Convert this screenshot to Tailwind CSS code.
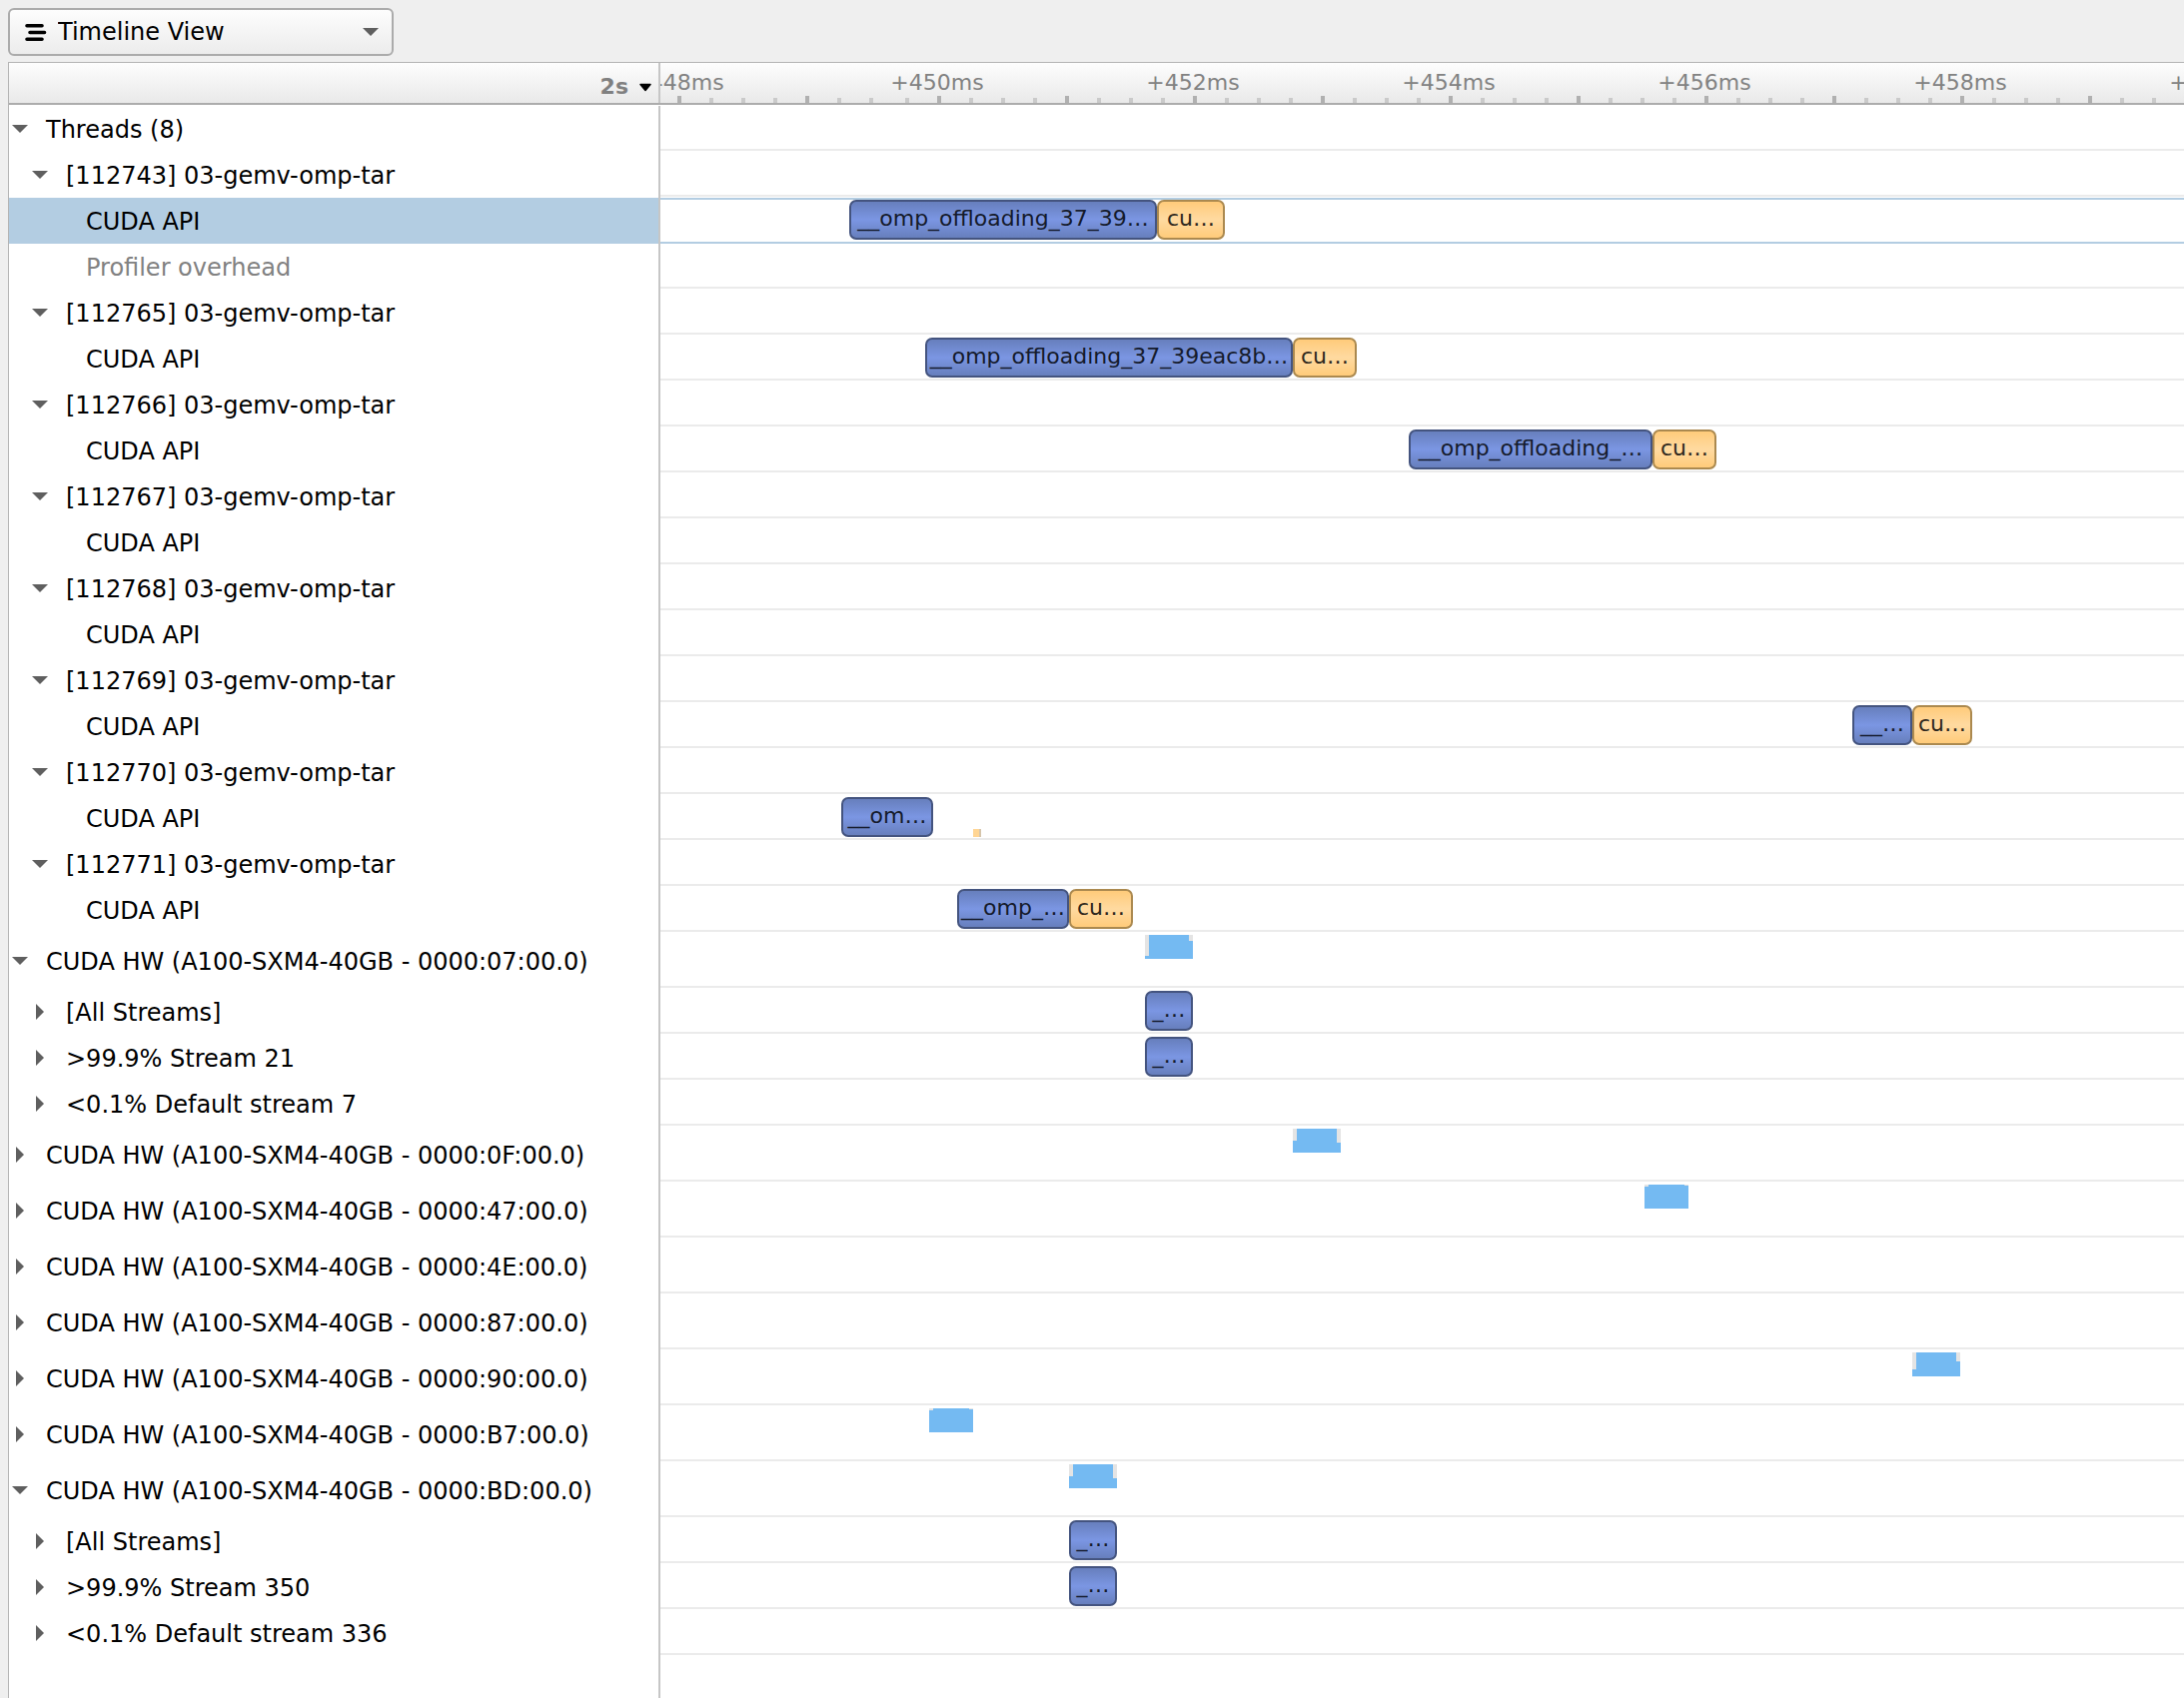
<!DOCTYPE html>
<html lang="en">
<head>
<meta charset="utf-8">
<title>Timeline View</title>
<script src="https://cdn.jsdelivr.net/npm/@tailwindcss/browser@4"></script>
</head>
<body class="flex h-screen flex-col overflow-hidden bg-[#efefef] pt-2 pl-2 font-['DejaVu_Sans',sans-serif] text-2xl text-black">
  <div class="relative mb-1.5 h-12 w-[386px] shrink-0">
    <select aria-label="View" class="h-12 w-full appearance-none rounded-md border-2 border-[#ababab] bg-linear-to-b from-[#fdfdfd] to-[#ececec] pl-12 text-2xl">
      <option>Timeline View</option>
    </select>
    <svg class="pointer-events-none absolute top-4 left-[17px]" width="22" height="18" viewBox="0 0 22 18" aria-hidden="true">
      <path d="M2 1.800H17M5 8.500H19.500M2 15.300H17" stroke="#000" stroke-width="3.600" stroke-linecap="round"/>
    </svg>
    <svg class="pointer-events-none absolute top-5 left-[355px]" width="16" height="8" viewBox="0 0 16 8" aria-hidden="true"><path d="M0 0H16L8 8Z" fill="#5f5f5f"/></svg>
  </div>

  <main class="flex min-h-0 flex-1 flex-col border-t border-l border-[#b4b4b4] bg-white">
    <header class="flex h-[42px] shrink-0 border-b-2 border-[#acacac] bg-linear-to-b from-[#fdfdfd] to-[#e9e9e9]">
      <div class="flex w-[652px] shrink-0 items-center justify-end border-r-2 border-[#c6c6c6] pt-2 pr-1.5">
        <button type="button" class="flex items-center gap-2.5 text-[22px] leading-7 font-bold text-[#808080]">2s
          <svg width="14" height="9" viewBox="0 0 14 9" aria-hidden="true"><path d="M2 1.500H12L7 7.500Z" fill="#000" stroke="#000" stroke-width="1.500" stroke-linejoin="round"/></svg>
        </button>
      </div>
      <div id="ruler" class="relative flex-1 overflow-hidden text-[22px] leading-7 text-[#828282]"></div>
    </header>
    <div id="rows" class="flex flex-1 flex-col pt-px"></div>
  </main>

<script>
  const kernel = (left, width, text) => ({ type: 'kernel', left, width, text });
  const call = (left, width, text = 'cu…') => ({ type: 'call', left, width, text });
  // lead and tail: height of the idle part in the first and last sample
  const load = (left, width, lead, tail) => ({ type: 'load', left, width, lead, tail });
  const thread = (id, ...bars) => [
    { level: 1, open: true, name: `[${id}] 03-gemv-omp-tar` },
    { level: 2, name: 'CUDA API', bars },
  ];
  const gpu = (bus, open, ...bars) => ({ level: 0, open, tall: true, name: `CUDA HW (A100-SXM4-40GB - 0000:${bus}:00.0)`, bars });
  const stream = (name, ...bars) => ({ level: 1, open: false, name, bars });

  const rows = [
    { level: 0, open: true, name: 'Threads (8)' },
    { level: 1, open: true, name: '[112743] 03-gemv-omp-tar' },
    { level: 2, name: 'CUDA API', selected: true, bars: [kernel(189, 308, '__omp_offloading_37_39…'), call(497, 68)] },
    { level: 2, name: 'Profiler overhead', muted: true },
    ...thread(112765, kernel(265, 368, '__omp_offloading_37_39eac8b…'), call(633, 64)),
    ...thread(112766, kernel(749, 244, '__omp_offloading_…'), call(993, 64)),
    ...thread(112767),
    ...thread(112768),
    ...thread(112769, kernel(1193, 60, '__…'), call(1253, 60)),
    ...thread(112770, kernel(181, 92, '__om…'), { type: 'dot', left: 313, width: 8 }),
    ...thread(112771, kernel(297, 112, '__omp_…'), call(409, 64)),
    gpu('07', true, load(485, 48, 21, 6)),
    stream('[All Streams]', kernel(485, 48, '_…')),
    stream('>99.9% Stream 21', kernel(485, 48, '_…')),
    stream('<0.1% Default stream 7'),
    gpu('0F', false, load(633, 48, 12, 14)),
    gpu('47', false, load(985, 44, 2, 1)),
    gpu('4E', false),
    gpu('87', false),
    gpu('90', false, load(1253, 48, 17, 9)),
    gpu('B7', false, load(269, 44, 2, 1)),
    gpu('BD', true, load(409, 48, 12, 14)),
    stream('[All Streams]', kernel(409, 48, '_…')),
    stream('>99.9% Stream 350', kernel(409, 48, '_…')),
    stream('<0.1% Default stream 336'),
  ];

  const esc = s => s.replace(/</g, '&lt;').replace(/>/g, '&gt;');
  const barClass = {
    kernel: 'top-0.5 flex h-10 items-center justify-center rounded-[7px] border-2 border-[#44547f] bg-linear-to-b from-[#677fbd] via-[#7b96e3] to-[#677fbd] pb-0.5 text-[#151b2c]',
    call: 'top-0.5 flex h-10 items-center justify-center rounded-[7px] border-2 border-[#ab894f] bg-linear-to-b from-[#ffcb7a] via-[#ffdaa0] to-[#ffcb7a] pb-0.5 text-[#2e281d]',
    load: 'top-0.5 flex h-6 justify-between bg-[#74baf2]',
    dot: 'bottom-1 h-2 border-r-2 border-[#d6c5ab] bg-[#ffd594]',
  };
  const bar = b => `<div class="absolute ${barClass[b.type]}" style="left:${b.left}px;width:${b.width}px">${
    b.type === 'load'
      ? `<i class="w-1 bg-[#e4e4e4]" style="height:${b.lead}px"></i><i class="w-1 bg-[#e4e4e4]" style="height:${b.tail}px"></i>`
      : esc(b.text || '')}</div>`;

  const indent = ['pl-px', 'pl-[21px]', 'pl-[41px]'];
  const arrow = open => open
    ? '<path d="M2 7H18L10 15Z" fill="#5f5f5f"/>'
    : '<path d="M6 3L14 11L6 19Z" fill="#5f5f5f"/>';
  const toggle = r => r.open === undefined ? '<span class="w-6"></span>'
    : `<button type="button" aria-label="Toggle ${esc(r.name)}" aria-expanded="${r.open}" class="size-6"><svg width="24" height="24" viewBox="0 0 24 24">${arrow(r.open)}</svg></button>`;

  document.getElementById('rows').innerHTML = rows.map(r => `
    <div class="flex shrink-0 ${r.tall ? 'h-14' : 'h-[46px]'}">
      <div class="flex w-[652px] shrink-0 items-center gap-3 border-r-2 border-[#c6c6c6] pt-0.5 ${indent[r.level]} ${r.selected ? 'bg-[#b3cde2]' : ''} ${r.muted ? 'text-[#828282]' : ''}">
        ${toggle(r)}<span class="whitespace-nowrap">${esc(r.name)}</span>
      </div>
      <div class="relative flex-1 overflow-hidden text-[22px] leading-7 whitespace-nowrap">
        <div class="${r.selected ? 'h-full border-y-2 border-[#b3cde2]' : r.tall ? 'h-[55px] border-b-2 border-[#ebebeb]' : 'h-[45px] border-b-2 border-[#ebebeb]'}"></div>
        ${(r.bars || []).map(bar).join('')}
      </div>
    </div>`).join('') + '<div class="w-[652px] flex-1 border-r-2 border-[#c6c6c6]"></div>';

  // One tick every 0.25 ms, a taller one every 1 ms, a label every 2 ms
  let marks = '';
  for (let i = 0; i < 50; i++) {
    const x = 17 + i * 32 + (i > 6 ? 4 : 0);
    marks += i % 4 === 0
      ? `<i class="absolute bottom-0 h-[7px] w-1 bg-[#b0b0b0]" style="left:${x}px"></i>`
      : `<i class="absolute bottom-0 h-[5px] w-1 bg-[#cacaca]" style="left:${x}px"></i>`;
    if (i % 8 === 0)
      marks += `<span class="absolute top-1.5 -translate-x-1/2" style="left:${x}px">+${448 + i / 4}ms</span>`;
  }
  document.getElementById('ruler').innerHTML = marks;
</script>
</body>
</html>
